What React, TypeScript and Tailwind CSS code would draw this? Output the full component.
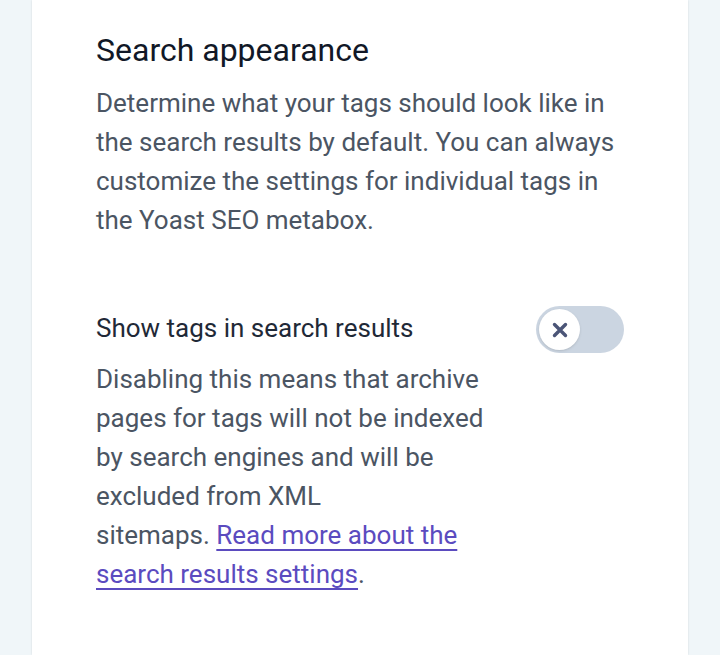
import React from 'react';

const ToggleOff: React.FC = () => (
  <button
    type="button"
    aria-checked={false}
    role="switch"
    className="relative -mt-[3px] flex h-[47px] w-[88px] shrink-0 items-center rounded-full bg-[#cbd5e1] p-[3px]"
  >
    <span className="flex h-[41px] w-[41px] items-center justify-center rounded-full bg-white shadow-sm">
      <svg width="16" height="16" viewBox="0 0 16 16" fill="none">
        <path d="M2.5 2.5l11 11M13.5 2.5l-11 11" stroke="#4b5577" strokeWidth="3.4" strokeLinecap="round" />
      </svg>
    </span>
  </button>
);

export default function App() {
  return (
    <div className="min-h-[655px] bg-[#f0f6f9] px-8 font-['Roboto',sans-serif]">
      <div className="min-h-[655px] bg-white px-16 pt-[30px] shadow-[0_0_2px_rgba(0,0,0,0.12)]">
        <h2 className="text-[32px] leading-[40px] text-[#111827]">Search appearance</h2>
        <p className="mt-[14px] text-[26px] leading-[39px] text-[#4b5563]">
          Determine what your tags should look like in the search results by default. You can always
          customize the settings for individual tags in the Yoast SEO metabox.
        </p>

        <div className="mt-[69px] flex items-start justify-between">
          <div className="w-[400px]">
            <h3 className="text-[26px] leading-[39px] text-[#1f2937]">Show tags in search results</h3>
            <p className="mt-[12px] text-[26px] leading-[39px] text-[#4b5563]">
              Disabling this means that archive pages for tags will not be indexed by search engines and
              will be excluded from XML sitemaps.{'\u00a0'}
              <a href="#" className="text-[#5b4bbf] underline underline-offset-[5px]">
                Read more about the search results settings
              </a>
              .
            </p>
          </div>
          <ToggleOff />
        </div>
      </div>
    </div>
  );
}
